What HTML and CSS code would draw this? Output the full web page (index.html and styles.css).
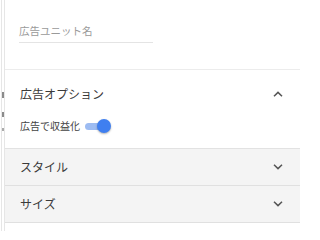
FILE: index.html
```html
<!DOCTYPE html>
<html lang="ja">
<head>
<meta charset="utf-8">
<link rel="stylesheet" href="styles.css">
</head>
<body>
<div class="page">
  <div class="side">
    <span class="mark m1"></span>
    <span class="mark m2"></span>
    <span class="mark m3"></span>
  </div>
  <div class="main">
    <div class="name-section">
      <div class="name-field">広告ユニット名</div>
    </div>
    <div class="options">
      <div class="row-head">
        <span class="title">広告オプション</span>
        <svg class="chev" width="10" height="6" viewBox="0 0 10 6"><path d="M1 5.2 L5 1.4 L9 5.2" fill="none" stroke="#555" stroke-width="1.5"/></svg>
      </div>
      <div class="toggle-row">
        <span class="toggle-label">広告で収益化</span>
        <span class="toggle"><span class="track"></span><span class="knob"></span></span>
      </div>
    </div>
    <div class="collapsed">
      <span class="title">スタイル</span>
      <svg class="chev" width="10" height="6" viewBox="0 0 10 6"><path d="M1 0.8 L5 4.6 L9 0.8" fill="none" stroke="#555" stroke-width="1.5"/></svg>
    </div>
    <div class="collapsed">
      <span class="title">サイズ</span>
      <svg class="chev" width="10" height="6" viewBox="0 0 10 6"><path d="M1 0.8 L5 4.6 L9 0.8" fill="none" stroke="#555" stroke-width="1.5"/></svg>
    </div>
  </div>
</div>
</body>
</html>
```

FILE: styles.css
```css
html, body {
  margin: 0;
  padding: 0;
  background: #ffffff;
}
body {
  font-family: "Noto Sans CJK JP", "Noto Sans", sans-serif;
  color: #333;
  width: 300px;
  height: 231px;
  overflow: hidden;
}
.page {
  display: flex;
  height: 231px;
}
.side {
  margin-left: 1px;
  width: 2px;
  border-left: 1px solid #e6e6e6;
  border-right: 1px solid #e6e6e6;
  display: flex;
  flex-direction: column;
  flex-shrink: 0;
}
.mark {
  display: block;
  width: 2px;
  background: #8a8a8a;
}
.m1 { margin-top: 92px; height: 6px; }
.m2 { margin-top: 14px; height: 5px; }
.m3 { margin-top: 11px; height: 3px; background: #aaa; }
.main {
  flex: 1;
  display: flex;
  flex-direction: column;
}
.name-section {
  height: 70px;
  border-bottom: 1px solid #ececec;
  padding: 24px 0 0 14px;
  box-sizing: border-box;
}
.name-field {
  width: 134px;
  font-size: 10.5px;
  line-height: 14px;
  color: #9a9a9a;
  padding-bottom: 4px;
  border-bottom: 1px solid #e4e4e4;
}
.options {
  padding: 16px 17px 14px 15px;
  border-bottom: 1px solid #e2e2e2;
}
.row-head {
  display: flex;
  justify-content: space-between;
  align-items: center;
  height: 16px;
}
.title {
  font-size: 12px;
  line-height: 16px;
  color: #3a3a3a;
}
.toggle-row {
  margin-top: 16px;
  height: 16px;
  display: flex;
  align-items: center;
  gap: 5px;
}
.toggle-label {
  font-size: 10px;
  line-height: 16px;
  color: #444;
}
.toggle {
  position: relative;
  width: 27px;
  height: 14px;
  display: inline-block;
}
.track {
  position: absolute;
  left: 0;
  top: 3.5px;
  width: 20px;
  height: 7px;
  border-radius: 4px;
  background: #9dbcf2;
}
.knob {
  position: absolute;
  left: 12px;
  top: 0;
  width: 14px;
  height: 14px;
  border-radius: 50%;
  background: #3f7ff0;
  box-shadow: 0 1px 2px rgba(0,0,0,0.3);
}
.collapsed {
  height: 36px;
  background: #f4f4f4;
  border-bottom: 1px solid #e0e0e0;
  display: flex;
  align-items: center;
  justify-content: space-between;
  padding: 0 17px 0 15px;
}
.chev {
  display: block;
}
```
